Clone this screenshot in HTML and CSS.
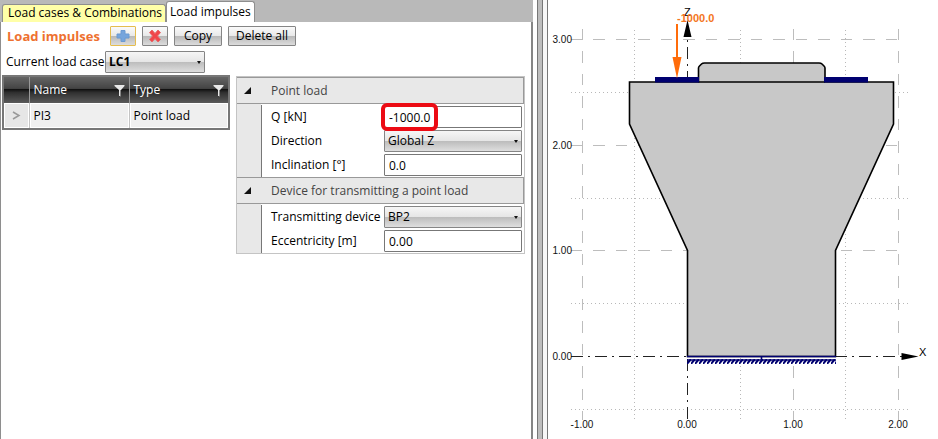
FILE: index.html
```
<!DOCTYPE html>
<html lang="en">
<head>
<meta charset="utf-8">
<title>Load impulses</title>
<link rel="stylesheet" href="styles.css">
</head>
<body>
<div class="app">
  <main class="editor">
    <nav class="tabs">
      <button class="tab tab-alt" type="button">Load cases &amp; Combinations</button>
      <button class="tab tab-active" type="button">Load impulses</button>
    </nav>
    <section class="panel">
      <div class="toolbar">
        <h1 class="title">Load impulses</h1>
        <button class="btn btn-icon btn-focus" type="button" aria-label="Add">
          <svg width="14" height="14" viewBox="0 0 14 14"><path d="M5 1.500h4v3.500h4v4h-4v3.500h-4v-3.500h-4v-4h4z" fill="#76a5dc" stroke="#6b9ad2"/></svg>
        </button>
        <button class="btn btn-icon" type="button" aria-label="Delete">
          <svg width="14" height="14" viewBox="0 0 14 14"><path d="M1.500 3.500L4 1l3 3.500L10 1l2.500 2.500L9.500 7l3 3.500L10 13 7 9.500 4 13l-2.500-2.500L4.500 7z" fill="#f0464a" stroke="#e8686a"/></svg>
        </button>
        <button class="btn btn-copy" type="button">Copy</button>
        <button class="btn btn-delete" type="button">Delete all</button>
      </div>
      <div class="case-row">
        <label for="load-case">Current load case</label>
        <span class="dropdown case-select"><select id="load-case"><option>LC1</option></select></span>
      </div>
      <div class="content">
        <table class="impulses">
          <thead>
            <tr>
              <th class="marker"></th>
              <th><div class="head-cell">Name<svg width="11" height="13" viewBox="0 0 11 13"><path d="M.5 1h10v1L7 6v6H5V6L.5 2z" fill="#e8e8e8"/><path d="M6.500 6v6.500" stroke="#888"/></svg></div></th>
              <th><div class="head-cell">Type<svg width="11" height="13" viewBox="0 0 11 13"><path d="M.5 1h10v1L7 6v6H5V6L.5 2z" fill="#e8e8e8"/><path d="M6.500 6v6.500" stroke="#888"/></svg></div></th>
            </tr>
          </thead>
          <tbody>
            <tr>
              <td class="marker"><svg width="9" height="9" viewBox="0 0 9 9"><path d="M1 1l6 3.500L1 8" fill="none" stroke="#999" stroke-width="1.500"/></svg></td>
              <td>PI3</td>
              <td>Point load</td>
            </tr>
          </tbody>
        </table>
        <div class="props">
          <h2 class="group"><svg width="8" height="8" viewBox="0 0 8 8"><path d="M7 0v7H0z" fill="#111"/></svg>Point load</h2>
          <div class="fields">
            <div class="field"><label for="q">Q [kN]</label><span class="control highlighted"><input id="q" type="text" value="-1000.0"></span></div>
            <div class="field"><label for="direction">Direction</label><span class="control dropdown"><select id="direction"><option>Global Z</option></select></span></div>
            <div class="field"><label for="inclination">Inclination [°]</label><span class="control"><input id="inclination" type="text" value="0.0"></span></div>
          </div>
          <h2 class="group"><svg width="8" height="8" viewBox="0 0 8 8"><path d="M7 0v7H0z" fill="#111"/></svg>Device for transmitting a point load</h2>
          <div class="fields">
            <div class="field"><label for="device">Transmitting device</label><span class="control dropdown"><select id="device"><option>BP2</option></select></span></div>
            <div class="field"><label for="eccentricity">Eccentricity [m]</label><span class="control"><input id="eccentricity" type="text" value="0.00"></span></div>
          </div>
        </div>
      </div>
    </section>
  </main>
  <div class="splitter"></div>
  <section class="drawing">
    <svg class="view" viewBox="548 0 390 439" preserveAspectRatio="xMinYMin meet" role="img" aria-label="Corbel cross-section with point load">
      <defs>
        <pattern id="hatch" width="4" height="5" x="687" y="359" patternUnits="userSpaceOnUse"><path d="M-1 6L5 -1" stroke="#000070" stroke-width="2"/></pattern>
      </defs>
      <g class="grid-half">
        <path d="M634.500 30V420M740.500 30V420M845.500 30V420M571 92.500H909M571 198.500H909M571 303.500H909M571 409.500H909"/>
      </g>
      <g class="grid-main">
        <path d="M582.500 29V420M793.500 29V420M898.500 29V420"/>
        <path d="M571 39.500H901M571 145.500H901M571 250.500H901"/>
      </g>
      <g class="axes">
        <path d="M571 356.500H902M687.500 419V36"/>
        <path class="arrow" d="M687.500 20l4 17h-8zM918.500 356.500l-17-3.500v7z"/>
      </g>
      <path class="solid" d="M698.500 82V68q0-1 1-2l2-2q1-1 3-1H819q2 0 3 1l2 2q1 1 1 2V82H893.500V124L835.500 250.500V356.500H687.500V250.500L629.500 124V82z"/>
      <path class="edge" d="M698.500 82H825"/>
      <path class="plate" d="M655 77h44v5.500h-44zM824 77h44v5.500h-44z"/>
      <path class="support" d="M687 356.500H836"/>
      <path class="support" d="M687 360H836M761.500 357v3"/>
      <rect x="687" y="359" width="149" height="5" fill="url(#hatch)"/>
      <path class="load-line" d="M677 24V60"/>
      <path class="load-head" d="M677 78.500l-4.500-21.500h9z"/>
      <g class="scale scale-y">
        <text x="572" y="43">3.00</text><text x="572" y="149">2.00</text><text x="572" y="254">1.00</text><text x="572" y="360">0.00</text>
      </g>
      <g class="scale scale-x">
        <text x="582" y="428">-1.00</text><text x="687" y="428">0.00</text><text x="793" y="428">1.00</text><text x="898" y="428">2.00</text>
      </g>
      <text class="axis-name" x="684" y="16">Z</text>
      <text class="axis-name" x="919" y="356">X</text>
      <text class="load-value" x="677" y="22">-1000.0</text>
    </svg>
  </section>
</div>
</body>
</html>
```
FILE: styles.css
```
*, *::before, *::after { box-sizing: border-box; }

body {
  margin: 0;
  font: 12px/16px "Open Sans", "Noto Sans", sans-serif;
  color: #000;
  background: #fff;
}

button, input, select { font: inherit; color: inherit; margin: 0; }

.app {
  display: grid;
  grid-template-columns: 533fr 15px 390fr;
  min-height: 100vh;
}

.editor {
  display: flex;
  flex-direction: column;
  min-width: 0;
  background: #b9b9b9;
}

.tabs {
  display: flex;
  align-items: flex-end;
  height: 22px;
  padding-left: 2px;
}

.tab {
  height: 18px;
  padding: 0 3px 1px 5px;
  border: 1px solid #8e8e8e;
  border-bottom: 0;
  border-radius: 3px 3px 0 0;
  line-height: 16px;
  white-space: nowrap;
  background: #fff;
}
.tab-alt { background: #ffffa8; }
.tab-active { height: 21px; padding: 0 3px; line-height: 20px; }

.panel {
  flex: 1;
  border-left: 1px solid #8e8e8e;
  border-right: 2px solid #858585;
  background: #fff;
}

.toolbar {
  display: flex;
  align-items: center;
  gap: 6px;
  padding: 4px 0 0 6px;
}

.title {
  width: 93px;
  margin: 0 4px 0 0;
  font-size: 13px;
  line-height: 20px;
  font-weight: 700;
  color: #ee7130;
  white-space: nowrap;
}

.btn {
  display: flex;
  align-items: center;
  justify-content: center;
  height: 20px;
  padding: 0;
  border: 1px solid #858585;
  border-radius: 1px;
  background: linear-gradient(#fafafa, #e9e9e9 48%, #b9b9b9 52%, #dcdcdc);
}
.btn-icon { width: 26px; }
.btn-focus { border-color: #e5bd4f; }
.btn-copy { width: 48px; }
.btn-delete { width: 68px; }

.case-row {
  display: flex;
  align-items: center;
  gap: 6px;
  padding: 5px 0 0 5px;
}
.case-row label { width: 93px; white-space: nowrap; }

.dropdown { position: relative; }
.dropdown::after {
  content: "";
  position: absolute;
  right: 4px;
  top: 50%;
  margin-top: -1px;
  border: 2px solid transparent;
  border-top: 3px solid #111;
  border-bottom: 0;
  pointer-events: none;
}

select {
  display: block;
  width: 100%;
  height: 22px;
  padding: 0 3px;
  border: 1px solid #858585;
  border-radius: 1px;
  appearance: none;
  background: linear-gradient(#f6f6f6, #e6e6e6 48%, #bdbdbd 52%, #dedede);
}
.case-select { width: 100px; }
.case-select select { font-weight: 700; }

.content {
  display: flex;
  align-items: flex-start;
  gap: 6px;
  padding: 2px 6px 0 1px;
}

.impulses {
  flex: 0 0 228px;
  width: 228px;
  table-layout: fixed;
  border-collapse: collapse;
  border: 2px solid #777;
}
.impulses th, .impulses td {
  height: 26px;
  padding: 0 4px;
  text-align: left;
  font-weight: 400;
}
.impulses th {
  height: 27px;
  border-right: 1px solid #999;
  color: #fff;
  background: linear-gradient(#656565, #444 44%, #121212 48%, #303030 60%, #5a5a5a);
}
.impulses td {
  border-right: 1px solid #c4c4c4;
  background: #efefef;
  box-shadow: inset 0 0 0 1px #fff;
}
.impulses .marker { width: 26px; text-align: center; }
.impulses .marker svg { display: block; margin: 0 auto; }
.impulses td.marker { background: #e6e6e6; }
.head-cell { display: flex; align-items: center; justify-content: space-between; }

.props {
  flex: 1 1 288px;
  max-width: 290px;
  margin-top: 1px;
  border: 1px solid #c4c4c4;
}

.group {
  display: flex;
  align-items: center;
  gap: 19px;
  height: 27px;
  margin: 0;
  padding-left: 7px;
  border: 1px solid #999;
  border-width: 1px 1px 1px 0;
  font-size: 12px;
  font-weight: 400;
  color: #444;
  background: #e8e8e8;
}

.fields {
  margin-right: 2px;
  padding-top: 1px;
  border-left: 24px solid #e8e8e8;
}

.field {
  display: flex;
  align-items: center;
  height: 24px;
  padding-left: 9px;
  border-left: 1px solid #777;
}
.field label { flex: 0 0 113px; white-space: nowrap; }
.control { flex: 1; min-width: 0; }

input {
  display: block;
  width: 100%;
  height: 22px;
  padding: 0 4px;
  border: 1px solid #777;
  border-radius: 1px;
  background: #fff;
}

.highlighted { position: relative; z-index: 1; }
.highlighted::after {
  content: "";
  position: absolute;
  left: -3px;
  top: -3px;
  width: 57px;
  height: 28px;
  border: 4px solid #ec0b14;
  border-radius: 6px;
  pointer-events: none;
}

.splitter {
  margin: 0 0 0 4px;
  border: solid #777;
  border-width: 0 1px;
  background: linear-gradient(90deg, #bdbdbd 4px, #777 4px, #777 5px, #f7f7f7 5px);
}

.drawing { min-width: 0; }
.view { display: block; width: 100%; height: auto; }

.grid-half { fill: none; stroke: #b8b8b8; stroke-dasharray: 1 3; }
.grid-main { fill: none; stroke: #bdbdbd; stroke-dasharray: 11 11 1 0 11 11; }
.axes { fill: none; stroke: #222; stroke-dasharray: 12 5 2 5; }
.axes .arrow { fill: #000; stroke: none; }
.solid { fill: #c8c8c8; stroke: #000; stroke-width: 1.600; }
.edge { stroke: #000; stroke-width: 1.600; }
.plate { fill: #000070; }
.support { fill: none; stroke: #000070; stroke-width: 1.600; }
.load-line { stroke: #ff6c0a; stroke-width: 2; }
.load-head { fill: #ff6c0a; }

.scale, .axis-name, .load-value { font-family: "Liberation Sans", Arial, sans-serif; }
.scale { font-size: 10px; fill: #111; }
.scale-y { text-anchor: end; }
.scale-x { text-anchor: middle; }
.axis-name { font-size: 11px; }
.load-value { font-size: 11px; font-weight: 700; fill: #f47521; }
```
